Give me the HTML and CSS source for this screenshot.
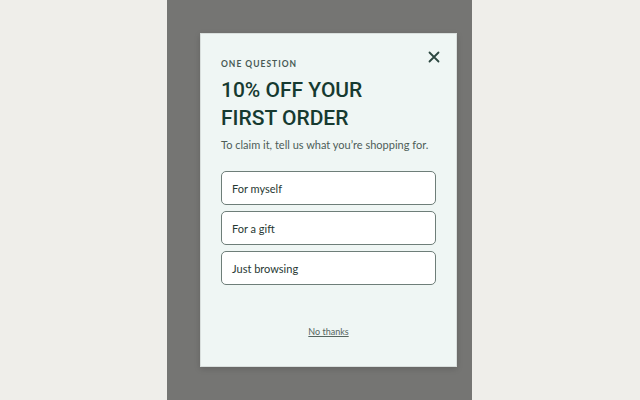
FILE: index.html
```html
<!DOCTYPE html>
<html lang="en">
<head>
<meta charset="utf-8">
<title>One question</title>
<link rel="stylesheet" href="styles.css">
</head>
<body>
<div class="overlay">
  <div class="modal">
    <div class="top">
      <p class="eyebrow">ONE QUESTION</p>
      <button class="close" aria-label="Close">
        <svg width="12" height="12" viewBox="0 0 12 12"><path d="M1.5 1.5L10.5 10.5M10.5 1.5L1.5 10.5" stroke="#2c4740" stroke-width="1.8" stroke-linecap="round"/></svg>
      </button>
    </div>
    <h1 class="title">10% OFF YOUR<br>FIRST ORDER</h1>
    <p class="sub">To claim it, tell us what you’re shopping for.</p>
    <div class="options">
      <button class="opt">For myself</button>
      <button class="opt">For a gift</button>
      <button class="opt">Just browsing</button>
    </div>
    <div class="foot"><a class="nothanks" href="#">No thanks</a></div>
  </div>
</div>
</body>
</html>
```
FILE: styles.css
```css
html, body { margin: 0; padding: 0; }
body {
  background: #efeeea;
  font-family: Lato, "Noto Sans", sans-serif;
  width: 640px;
  height: 400px;
  overflow: hidden;
}
.overlay {
  margin-left: 167px;
  width: 305px;
  height: 400px;
  background: #757573;
  display: flex;
  align-items: center;
  padding-left: 33px;
  box-sizing: border-box;
}
.modal {
  width: 257px;
  height: 334px;
  box-sizing: border-box;
  background: #eff6f4;
  border: 1px solid #d9dfdd;
  box-shadow: 0 2px 6px rgba(0,0,0,0.15);
  padding: 0 20px;
  display: flex;
  flex-direction: column;
}
.top {
  display: flex;
  justify-content: space-between;
  align-items: flex-start;
  height: 42px;
}
.eyebrow {
  margin: 24px 0 0;
  font-size: 8.5px;
  font-weight: 700;
  letter-spacing: 1px;
  color: #485a54;
  line-height: 12px;
}
.close {
  margin: 17px -4px 0 0;
  padding: 0;
  border: 0;
  background: none;
  width: 12px;
  height: 12px;
  display: flex;
}
.title {
  margin: 0;
  font-family: Roboto, "Noto Sans", sans-serif;
  font-size: 21px;
  line-height: 28px;
  font-weight: 500;
  color: #163a30;
}
.sub {
  margin: 6px 0 0;
  font-size: 11px;
  line-height: 14px;
  color: #4d5d58;
}
.options {
  margin-top: 19px;
  display: flex;
  flex-direction: column;
  gap: 6px;
}
.opt {
  height: 34px;
  box-sizing: border-box;
  border: 1px solid #6e7e79;
  border-radius: 5px;
  background: #fff;
  text-align: left;
  padding: 0 10px;
  font-family: inherit;
  font-size: 11px;
  color: #273833;
}
.foot {
  margin-top: 34px;
  text-align: center;
}
.nothanks {
  font-size: 9px;
  color: #56655f;
  text-decoration: underline;
}
```
